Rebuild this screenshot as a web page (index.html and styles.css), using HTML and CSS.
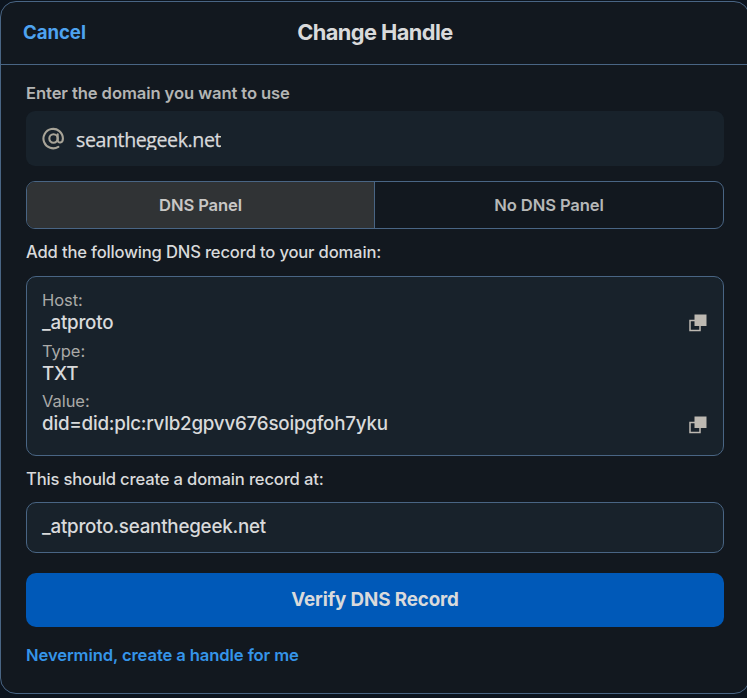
FILE: index.html
```html
<!DOCTYPE html>
<html lang="en">
<head>
<meta charset="utf-8">
<title>Change Handle</title>
<link rel="stylesheet" href="styles.css">
</head>
<body>
<main class="dialog">
  <header class="header">
    <a class="cancel">Cancel</a>
    <h1 class="title">Change Handle</h1>
    <span></span>
  </header>
  <div class="content">
    <p class="label">Enter the domain you want to use</p>
    <div class="input">
      <svg class="at" viewBox="0 0 22 22" fill="none" stroke="currentColor" stroke-width="2" stroke-linecap="round">
        <circle cx="11" cy="11" r="4"/>
        <path d="M15 7v5.600c0 3.200 5 3.200 5-1.600a9.300 9.300 0 1 0-4.400 8"/>
      </svg>
      <span class="domain">seanthegeek.net</span>
    </div>
    <div class="tabs">
      <div class="tab active"><span>DNS Panel</span></div>
      <div class="tab"><span>No DNS Panel</span></div>
    </div>
    <p class="text add"><span>Add the following DNS record to your domain:</span></p>
    <section class="record">
      <div class="row">
        <div><div class="key">Host:</div><div class="value">_atproto</div></div>
        <svg class="copy" viewBox="0 0 18 18"><path d="M1 6.500h10v10H1z" fill="none" stroke="currentColor" stroke-width="1.500"/><path d="M5.500.5h12v11.500h-12z" fill="currentColor"/></svg>
      </div>
      <div class="row">
        <div><div class="key">Type:</div><div class="value">TXT</div></div>
      </div>
      <div class="row">
        <div><div class="key">Value:</div><div class="value">did=did:plc:rvlb2gpvv676soipgfoh7yku</div></div>
        <svg class="copy" viewBox="0 0 18 18"><path d="M1 6.500h10v10H1z" fill="none" stroke="currentColor" stroke-width="1.500"/><path d="M5.500.5h12v11.500h-12z" fill="currentColor"/></svg>
      </div>
    </section>
    <p class="text should"><span>This should create a domain record at:</span></p>
    <div class="result"><span>_atproto.seanthegeek.net</span></div>
    <div class="verify"><span>Verify DNS Record</span></div>
    <a class="never">Nevermind, create a handle for me</a>
  </div>
</main>
</body>
</html>
```
FILE: styles.css
```css
* { box-sizing: border-box; }
body {
  margin: 0;
  height: 698px;
  padding-top: 1px;
  overflow: hidden;
  background: #0c141e;
  font-family: Inter, "Liberation Sans", sans-serif;
  color: #d9dadb;
  white-space: nowrap;
}
p, h1 { margin: 0; }
.dialog {
  width: 750px;
  height: 693px;
  border: 1px solid #496584;
  border-radius: 16px;
  background: #12181f;
}
.header {
  display: grid;
  grid-template-columns: 1fr auto 1fr;
  align-items: center;
  height: 63px;
  padding: 0 22px 2px 22px;
  border-bottom: 1px solid #496584;
}
.cancel { font-size: 18.600px; font-weight: 650; letter-spacing: -0.050px; color: #4ea3f0; }
.title { font-size: 21.800px; line-height: 28px; font-weight: 650; letter-spacing: -0.570px; }
.content {
  display: flex;
  flex-direction: column;
  width: 748px;
  padding: 18px 25px 0;
}
.label { height: 28px; line-height: 21px; font-size: 16.600px; font-weight: 600; letter-spacing: -0.090px; color: #b4b5b4; }
.input {
  display: flex;
  align-items: center;
  width: 698px;
  height: 55px;
  padding: 0 16px;
  gap: 11px;
  border-radius: 9px;
  background: #18222b;
}
.at { width: 23px; height: 23px; color: #a8a498; }
.domain {
  height: 23px;
  line-height: 25px;
  overflow: hidden;
  font-family: "Open Sans", "Noto Sans", sans-serif;
  font-size: 19.600px;
  font-weight: 500;
  letter-spacing: -0.420px;
  -webkit-text-stroke: 0.250px currentColor;
}
.tabs {
  display: grid;
  grid-template-columns: 1fr 1fr;
  width: 698px;
  height: 48px;
  margin-top: 15px;
  border: 1px solid #496584;
  border-radius: 9px;
  overflow: hidden;
}
.tab {
  display: flex;
  align-items: center;
  justify-content: center;
  font-size: 16.600px;
  font-weight: 600;
  letter-spacing: -0.110px;
  color: #b7b8b8;
}
.active { background: #303335; border-right: 1px solid #496584; color: #c8c7c5; }
.text { font-size: 16.600px; line-height: 22px; font-weight: 500; letter-spacing: -0.170px; }
.add { height: 35px; margin-top: 12px; }
.record {
  width: 698px;
  height: 180px;
  padding: 13px 16px 13px 15px;
  border: 1px solid #496584;
  border-radius: 10px;
  background: #18222b;
}
.row {
  display: flex;
  justify-content: space-between;
  height: 50.500px;
}
.key { font-size: 16.500px; line-height: 20px; letter-spacing: -0.050px; color: #aaaaa8; }
.value { font-size: 18.800px; line-height: 26px; font-weight: 500; letter-spacing: -0.230px; }
.copy { width: 18px; height: 18px; margin-top: 24px; color: #bdb9b2; }
.row:last-child .copy { margin-top: 25px; }
.should { height: 34px; margin-top: 12px; }
.result {
  display: flex;
  align-items: center;
  width: 698px;
  height: 51px;
  padding: 0 15px 3px;
  border: 1px solid #496584;
  border-radius: 10px;
  background: #18222b;
  font-size: 18.800px;
  font-weight: 500;
  letter-spacing: -0.230px;
}
.verify {
  display: flex;
  align-items: center;
  justify-content: center;
  width: 698px;
  height: 54px;
  padding-bottom: 2px;
  margin-top: 20px;
  border-radius: 10px;
  background: #0059b8;
  font-size: 18.800px;
  font-weight: 650;
  letter-spacing: -0.120px;
}
.never { margin-top: 17px; line-height: 22px; font-size: 16.600px; font-weight: 620; letter-spacing: -0.100px; color: #3595e9; }
```
